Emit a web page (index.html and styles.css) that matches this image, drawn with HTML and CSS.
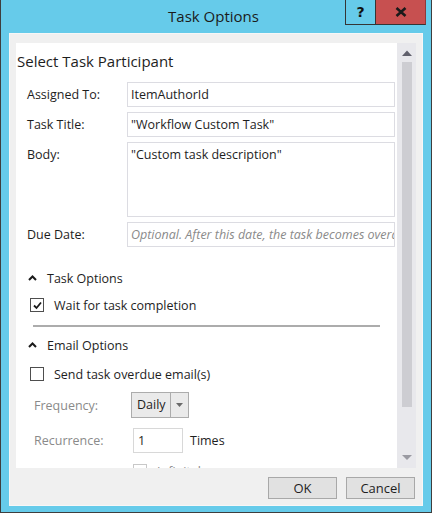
FILE: index.html
```html
<!DOCTYPE html>
<html>
<head>
<meta charset="utf-8">
<link rel="stylesheet" href="styles.css">
</head>
<body>
<div class="window">
  <div class="titlebar">
    <div></div>
    <div class="title">Task Options</div>
    <div class="controls">
      <div class="ctl help">?</div>
      <div class="ctl close">
        <svg width="12" height="10" viewBox="0 0 12 10"><path d="M1.5 1 L10.5 9 M10.5 1 L1.5 9" stroke="#1a1a1a" stroke-width="2.6" fill="none"/></svg>
      </div>
    </div>
  </div>
  <div class="frame">
    <div class="panel">
      <div class="content">
        <div class="heading">Select Task Participant</div>
        <div class="form">
          <div class="label">Assigned To:</div>
          <div class="field">ItemAuthorId</div>
          <div class="label">Task Title:</div>
          <div class="field">"Workflow Custom Task"</div>
          <div class="label">Body:</div>
          <div class="field area">"Custom task description"</div>
          <div class="label">Due Date:</div>
          <div class="field placeholder">Optional. After this date, the task becomes overdue.</div>
        </div>
        <div class="section first">
          <svg class="caret" width="9" height="6" viewBox="0 0 9 6"><path d="M1 5 L4.5 1.5 L8 5" stroke="#1a1a1a" stroke-width="2" fill="none"/></svg>
          <span>Task Options</span>
        </div>
        <div class="check-row">
          <span class="box">
            <svg width="11" height="11" viewBox="0 0 11 11"><path d="M2 5.5 L4.5 8 L9 2.5" stroke="#1a1a1a" stroke-width="1.8" fill="none"/></svg>
          </span>
          <span>Wait for task completion</span>
        </div>
        <div class="divider"></div>
        <div class="section">
          <svg class="caret" width="9" height="6" viewBox="0 0 9 6"><path d="M1 5 L4.5 1.5 L8 5" stroke="#1a1a1a" stroke-width="2" fill="none"/></svg>
          <span>Email Options</span>
        </div>
        <div class="check-row second">
          <span class="box"></span>
          <span>Send task overdue email(s)</span>
        </div>
        <div class="sub">
          <div class="dlabel">Frequency:</div>
          <div class="select"><span class="sel-text">Daily</span><span class="sel-btn"><svg width="7" height="4" viewBox="0 0 7 4"><path d="M0 0 H7 L3.5 4 Z" fill="#6a6a6a"/></svg></span></div>
          <div class="dlabel">Recurrence:</div>
          <div class="rec"><span class="num">1</span><span class="times">Times</span></div>
          <div></div>
          <div class="inf"><span class="box light"></span><span class="dlabel">Infinitely</span></div>
        </div>
      </div>
      <div class="scrollbar">
        <svg class="arr" width="10" height="6" viewBox="0 0 10 6"><path d="M0 6 L5 0.5 L10 6 Z" fill="#60606c"/></svg>
        <div class="thumb"></div>
        <div class="track"></div>
        <svg class="arr" width="10" height="5" viewBox="0 0 10 5"><path d="M0 0 L10 0 L5 5 Z" fill="#9a9aa2"/></svg>
      </div>
    </div>
    <div class="buttons">
      <div class="btn">OK</div>
      <div class="btn">Cancel</div>
    </div>
  </div>
</div>
</body>
</html>
```

FILE: styles.css
```css
* { box-sizing: border-box; }
html, body { margin: 0; padding: 0; background: #ffffff; }
body {
  font-family: "Open Sans", "Noto Sans", sans-serif;
  color: #1e1e1e;
}
.window {
  width: 432px;
  height: 513px;
  background: #66cbea;
  border: 1px solid #3e3e3e;
  border-top: none;
  display: flex;
  flex-direction: column;
}
.titlebar {
  height: 33px;
  flex: none;
  display: grid;
  grid-template-columns: 1fr auto 1fr;
  padding-right: 5px;
}
.title {
  font-size: 15px;
  line-height: 33px;
  color: #1b1b1b;
}
.controls {
  justify-self: end;
  display: flex;
  height: 25px;
}
.ctl {
  height: 25px;
  display: flex;
  align-items: center;
  justify-content: center;
  border-bottom: 1px solid #353535;
}
.help {
  width: 31px;
  border-left: 1px solid #353535;
  border-right: 1px solid #353535;
  font-weight: bold;
  font-size: 14px;
  font-family: "DejaVu Sans", sans-serif;
  color: #111;
}
.close {
  width: 50px;
  background: #c75050;
  border-right: 1px solid #8e3a3a;
}
.frame {
  flex: 1;
  margin: 0 8px 7px 8px;
  background: #f0f0f0;
  border: 1px solid #f7f7f7;
  padding: 9px 6px 6px 6px;
  display: flex;
  flex-direction: column;
}
.panel {
  height: 425px;
  display: flex;
}
.content {
  flex: 1;
  background: #ffffff;
  overflow: hidden;
  padding: 7px 2px 0 1px;
  font-size: 12.5px;
}
.heading {
  font-size: 15px;
  line-height: 22px;
  margin-bottom: 10px;
}
.form {
  display: grid;
  grid-template-columns: 110px 1fr;
  row-gap: 5px;
}
.label {
  padding-left: 10px;
  line-height: 25px;
}
.field {
  height: 25px;
  border: 1px solid #dcdce2;
  padding: 0 3px;
  line-height: 23px;
  white-space: nowrap;
  overflow: hidden;
}
.field.area { height: 75px; }
.field.placeholder { font-style: italic; color: #8a8a8a; }
.section {
  display: flex;
  align-items: center;
  height: 20px;
  padding-left: 11px;
  margin-top: 8px;
}
.section.first { margin-top: 21px; }
.caret { margin-right: 10px; }
.check-row {
  display: flex;
  align-items: center;
  height: 20px;
  margin-top: 7px;
  padding-left: 13px;
}
.check-row.second { margin-top: 9px; }
.box {
  width: 14px;
  height: 14px;
  border: 1px solid #4e4e4e;
  display: inline-flex;
  align-items: center;
  justify-content: center;
  margin-right: 10px;
  background: #fff;
  flex: none;
}
.box.light { border-color: #c8c8c8; }
.divider {
  height: 2px;
  background: #acacac;
  margin: 10px 15px 0 16px;
}
.sub {
  display: grid;
  grid-template-columns: 114px 1fr;
  row-gap: 10px;
  margin-top: 8px;
  align-items: center;
}
.dlabel { color: #8a8a8a; padding-left: 17px; }
.inf .dlabel { padding-left: 0; }
.select {
  width: 58px;
  height: 26px;
  border: 1px solid #acacac;
  background: #eaeaea;
  display: flex;
}
.sel-text { width: 39px; line-height: 24px; padding-left: 5px; border-right: 1px solid #acacac; }
.sel-btn { flex: 1; display: flex; align-items: center; justify-content: center; }
.rec { display: flex; align-items: center; }
.num {
  width: 50px;
  height: 25px;
  margin-left: 2px;
  border: 1px solid #d8d8d8;
  line-height: 23px;
  padding-left: 4px;
}
.times { margin-left: 7px; }
.inf { display: flex; align-items: center; margin-left: 2px; height: 16px; }
.scrollbar {
  width: 19px;
  background: #e8e8ec;
  display: flex;
  flex-direction: column;
  align-items: center;
  padding: 7px 0 8px 0;
}
.arr { flex: none; }
.thumb {
  width: 10px;
  height: 345px;
  background: #cdcdd2;
  margin-top: 6px;
}
.track { flex: 1; }
.buttons {
  display: flex;
  justify-content: flex-end;
  gap: 9px;
  margin-top: 9px;
  padding-right: 1px;
}
.btn {
  width: 69px;
  height: 22px;
  background: #e1e1e1;
  border: 1px solid #a8a8a8;
  text-align: center;
  line-height: 20px;
  font-size: 13px;
}
```
